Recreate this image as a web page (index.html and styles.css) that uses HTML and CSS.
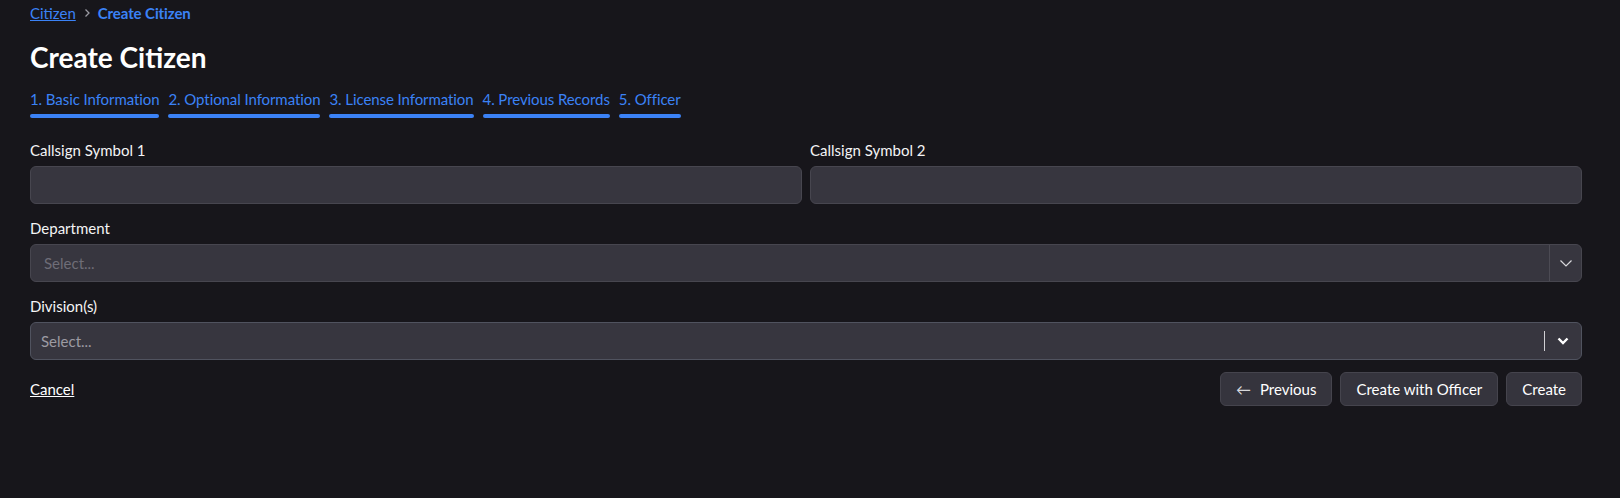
FILE: index.html
```html
<!DOCTYPE html>
<html lang="en">
  <head>
    <meta charset="UTF-8" />
    <meta name="viewport" content="width=device-width, initial-scale=1.0" />
    <title>Create Citizen</title>
    <link rel="stylesheet" href="styles.css">
  </head>

  <body>
    <div class="page">
      <nav class="crumbs">
        <a href="#" class="crumb_link">Citizen</a>
        <svg class="crumb_sep" width="12" height="12" viewBox="0 0 12 12">
          <path d="M4.5 2.5 L8 6 L4.5 9.5" fill="none" stroke="#9a9aa2" stroke-width="1.3" />
        </svg>
        <span class="crumb_current">Create Citizen</span>
      </nav>

      <h1 class="title">Create Citizen</h1>

      <ul class="steps">
        <li>1. Basic Information</li>
        <li>2. Optional Information</li>
        <li>3. License Information</li>
        <li>4. Previous Records</li>
        <li>5. Officer</li>
      </ul>

      <form class="form">
        <div class="row">
          <div class="field">
            <label>Callsign Symbol 1</label>
            <input class="input" type="text" />
          </div>
          <div class="field">
            <label>Callsign Symbol 2</label>
            <input class="input" type="text" />
          </div>
        </div>

        <div class="field">
          <label>Department</label>
          <div class="select">
            <span class="placeholder">Select...</span>
            <span class="indicator">
              <svg width="14" height="14" viewBox="0 0 14 14">
                <path d="M1.5 4.5 L7 10 L12.5 4.5" fill="none" stroke="#d8d8dc" stroke-width="1.2" />
              </svg>
            </span>
          </div>
        </div>

        <div class="field">
          <label>Division(s)</label>
          <div class="select multi">
            <span class="placeholder">Select...</span>
            <span class="bar"></span>
            <span class="indicator">
              <svg width="14" height="14" viewBox="0 0 14 14">
                <path d="M2.5 4.5 L7 9 L11.5 4.5" fill="none" stroke="#ffffff" stroke-width="2.4" />
              </svg>
            </span>
          </div>
        </div>

        <div class="footer">
          <a href="#" class="cancel">Cancel</a>
          <div class="buttons">
            <button type="button" class="btn"><span class="arrow">←</span>Previous</button>
            <button type="button" class="btn">Create with Officer</button>
            <button type="button" class="btn">Create</button>
          </div>
        </div>
      </form>
    </div>
  </body>
</html>
```

FILE: styles.css
```css
* {
  margin: 0;
  padding: 0;
  box-sizing: border-box;
}

body {
  background-color: #17161b;
  color: #f4f4f5;
  font-family: Lato, "Open Sans", sans-serif;
  font-size: 15px;
}

li {
  list-style-type: none;
}

.page {
  padding: 0 38px 0 30px;
}

.crumbs {
  display: flex;
  align-items: center;
  height: 26px;
  gap: 5px;
}

.crumb_link {
  color: #3b82f6;
  text-decoration: underline;
}

.crumb_current {
  color: #3b82f6;
  font-weight: 700;
  letter-spacing: -0.1px;
}

.title {
  margin-top: 13px;
  font-size: 28px;
  line-height: 36px;
  font-weight: 700;
  color: #ffffff;
}

.steps {
  display: flex;
  gap: 9px;
  margin-top: 12px;
}

.steps li {
  color: #3b82f6;
  line-height: 24px;
  letter-spacing: -0.08px;
}

.steps li::after {
  content: "";
  display: block;
  height: 4px;
  margin-top: 3px;
  border-radius: 2px;
  background-color: #3b82f6;
}

.form {
  margin-top: 20px;
}

.row {
  display: flex;
  gap: 8px;
}

.row .field {
  flex: 1;
}

.field {
  margin-bottom: 12px;
}

.field label {
  display: block;
  line-height: 24px;
  margin-bottom: 4px;
  color: #f4f4f5;
}

.input {
  display: block;
  width: 100%;
  height: 38px;
  border: 1px solid #47464f;
  border-radius: 6px;
  background-color: #37363f;
  color: #fff;
  font: inherit;
  padding: 0 12px;
}

.select {
  display: flex;
  align-items: center;
  height: 38px;
  border: 1px solid #47464f;
  border-radius: 6px;
  background-color: #37363f;
}

.placeholder {
  flex: 1;
  padding-left: 13px;
  color: #6e6d77;
}

.indicator {
  display: flex;
  align-items: center;
  justify-content: center;
  width: 32px;
  height: 100%;
  border-left: 1px solid #4c4b54;
}

.select.multi {
  border-color: #50535f;
}

.select.multi .placeholder {
  padding-left: 10px;
  color: #9c9ba3;
}

.select.multi .bar {
  width: 1px;
  height: 20px;
  background-color: #d0d0d4;
}

.select.multi .indicator {
  width: 36px;
  border-left: none;
}

.footer {
  display: flex;
  justify-content: space-between;
  align-items: center;
  margin-top: 2px;
}

.cancel {
  color: #ffffff;
  text-decoration: underline;
}

.buttons {
  display: flex;
  gap: 8px;
}

.btn {
  height: 34px;
  padding: 0 15px;
  border: 1px solid #45444d;
  border-radius: 6px;
  background-color: #35343d;
  color: #ffffff;
  font: inherit;
  cursor: pointer;
}

.arrow {
  margin-right: 9px;
  color: #d8d8dc;
}
```
